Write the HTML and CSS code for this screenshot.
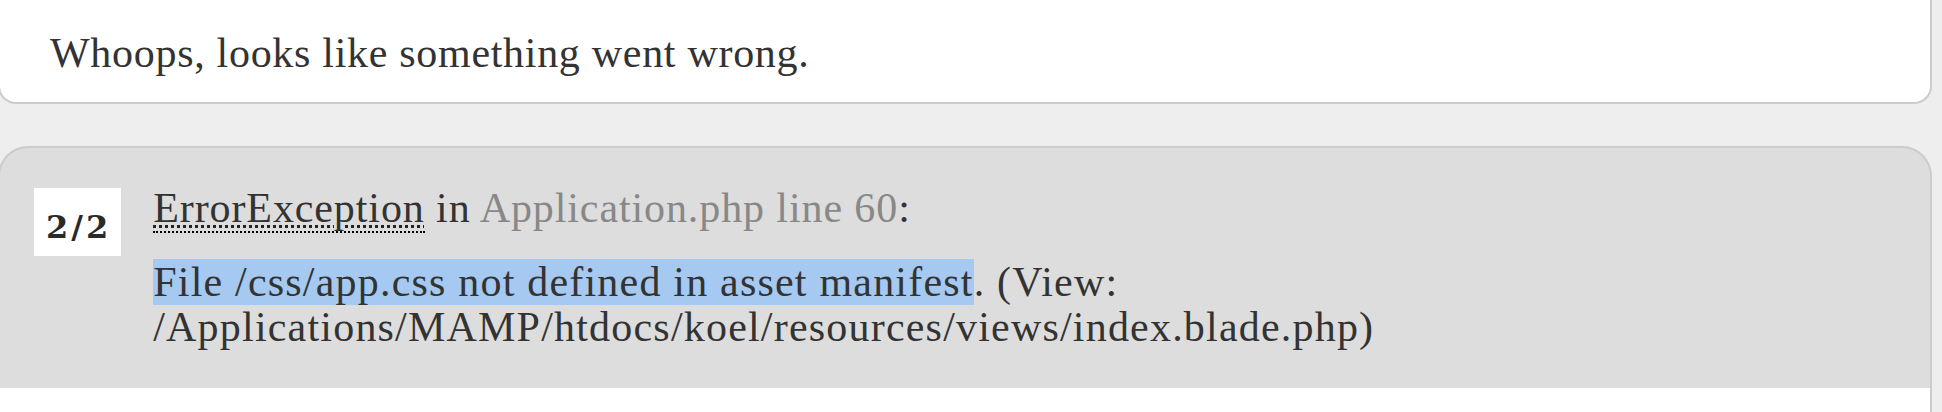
FILE: index.html
```html
<!DOCTYPE html>
<html lang="en">
<head>
<meta charset="utf-8">
<title>Whoops, looks like something went wrong.</title>
<link rel="stylesheet" href="styles.css">
</head>
<body>
<div class="sf-reset">
  <div class="block head-block">
    <h1 class="head-title">Whoops, looks like something went wrong.</h1>
  </div>
  <div class="block-exception">
    <span class="exception-counter">2/2</span>
    <div class="exception-body">
      <h2 class="exception-title"><abbr class="exc-abbr" title="ErrorException">ErrorException</abbr> in <a class="exc-link" title="Application.php line 60">Application.php line 60</a>:</h2>
      <p class="exception-message"><span class="selected">File /css/app.css not defined in asset manifest</span>. (View: /Applications/MAMP/htdocs/koel/resources/views/index.blade.php)</p>
    </div>
  </div>
  <div class="block traces-block"></div>
</div>
</body>
</html>
```
FILE: styles.css
```css
html, body {
  margin: 0;
  padding: 0;
  background: #eee;
  overflow: hidden;
}

.sf-reset {
  font-family: "Liberation Serif", "Times New Roman", serif;
  color: #333;
  font-size: 42px;
  letter-spacing: 0.8px;
}

.block {
  background: #fff;
  border: 2px solid #ccc;
  border-top: none;
  margin: 0 10px 0 -2px;
}

.head-block {
  padding: 29px 50px 25px 50px;
  border-radius: 0 0 18px 18px;
  margin-bottom: 42px;
}

.head-title {
  margin: 0;
  font-size: 42px;
  font-weight: normal;
  line-height: 48px;
  letter-spacing: 0.7px;
}

.block-exception {
  display: flex;
  align-items: flex-start;
  gap: 32px;
  background: #ddd;
  border: 2px solid #ccc;
  border-bottom: none;
  border-radius: 30px 30px 0 0;
  margin: 0 10px 0 -2px;
  padding: 38px 40px 38px 34px;
}

.exception-counter {
  flex: none;
  margin-top: 2px;
  background: #fff;
  color: #2a2a2a;
  font-family: "DejaVu Serif", serif;
  font-size: 32px;
  font-weight: bold;
  letter-spacing: 3px;
  line-height: 44px;
  padding: 17px 10px 7px 12px;
}

.exception-body {
  flex: 1;
  min-width: 0;
}

.exception-title {
  margin: 0 0 29px 0;
  font-size: 42px;
  font-weight: normal;
  line-height: 45px;
  letter-spacing: 0.9px;
}

.exc-abbr {
  text-decoration: underline dotted #222;
  text-decoration-thickness: 3px;
  text-underline-offset: 3px;
  border-bottom: 2px dotted #000;
}

.exc-link {
  color: #888;
  text-decoration: none;
}

.exception-message {
  margin: 0;
  line-height: 45px;
  letter-spacing: 1.2px;
}

.selected {
  background: #a5c9f0;
}

.traces-block {
  height: 120px;
}
```
